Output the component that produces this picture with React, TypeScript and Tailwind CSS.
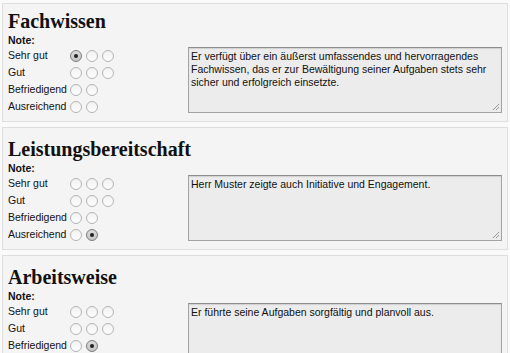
const grades = [
  { label: "Sehr gut", count: 3 },
  { label: "Gut", count: 3 },
  { label: "Befriedigend", count: 2 },
  { label: "Ausreichend", count: 2 },
];

type Section = {
  title: string;
  text: string;
  checked: [number, number] | null;
};

const sections: Section[] = [
  {
    title: "Fachwissen",
    text: "Er verfügt über ein äußerst umfassendes und hervorragendes Fachwissen, das er zur Bewältigung seiner Aufgaben stets sehr sicher und erfolgreich einsetzte.",
    checked: [0, 0],
  },
  {
    title: "Leistungsbereitschaft",
    text: "Herr Muster zeigte auch Initiative und Engagement.",
    checked: [3, 1],
  },
  {
    title: "Arbeitsweise",
    text: "Er führte seine Aufgaben sorgfältig und planvoll aus.",
    checked: [2, 1],
  },
];

const Radio = ({ checked }: { checked: boolean }) => (
  <span
    className={
      "flex size-[12px] items-center justify-center rounded-full border " +
      (checked
        ? "border-[#7d7d7d] bg-gradient-to-b from-[#dcdcdc] to-[#c4c4c4]"
        : "border-[#b4b4b4] bg-gradient-to-b from-[#f2f2f2] to-[#fdfdfd]")
    }
  >
    {checked && <span className="size-[4px] rounded-full bg-[#222]" />}
  </span>
);

const GradeSection = ({ section }: { section: Section }) => (
  <div className="mb-[5px] border border-[#dedede] bg-[#f4f4f4] px-[5px] pt-[9px] pb-[6px] first:pt-[5px]">
    <h2 className="font-['Liberation_Serif',serif] text-[20px] font-bold leading-[24px] text-[#111]">
      {section.title}
    </h2>
    <div className="mt-[1px] text-[10.5px] font-bold leading-[13px] text-[#111]">Note:</div>
    <div className="flex">
      <div className="w-[180px]">
        {grades.map((g, row) => (
          <div key={g.label} className="flex h-[17px] items-center">
            <span className="w-[62px] text-[10.5px] leading-[13px] text-[#111]">{g.label}</span>
            <div className="flex gap-[4px]">
              {Array.from({ length: g.count }).map((_, col) => (
                <Radio
                  key={col}
                  checked={!!section.checked && section.checked[0] === row && section.checked[1] === col}
                />
              ))}
            </div>
          </div>
        ))}
      </div>
      <div className="relative h-[66px] w-[314px] border border-[#a3a3a3] border-t-[#8e8e8e] bg-[#ececec] px-[2px] pt-[2px] text-[10.5px] leading-[13px] text-[#111] shadow-[inset_0_1px_1px_rgba(0,0,0,0.12)]">
        {section.text}
        <svg className="absolute right-[1px] bottom-[1px]" width="8" height="8" viewBox="0 0 8 8">
          <path d="M7 1L1 7M7 4L4 7" stroke="#999" strokeWidth="1" />
        </svg>
      </div>
    </div>
  </div>
);

export default function App() {
  return (
    <div className="h-[353px] w-[510px] overflow-hidden bg-[#fafafa] px-[2px] pt-[3px] font-['Liberation_Sans',Arial,sans-serif]">
      {sections.map((s) => (
        <GradeSection key={s.title} section={s} />
      ))}
    </div>
  );
}
